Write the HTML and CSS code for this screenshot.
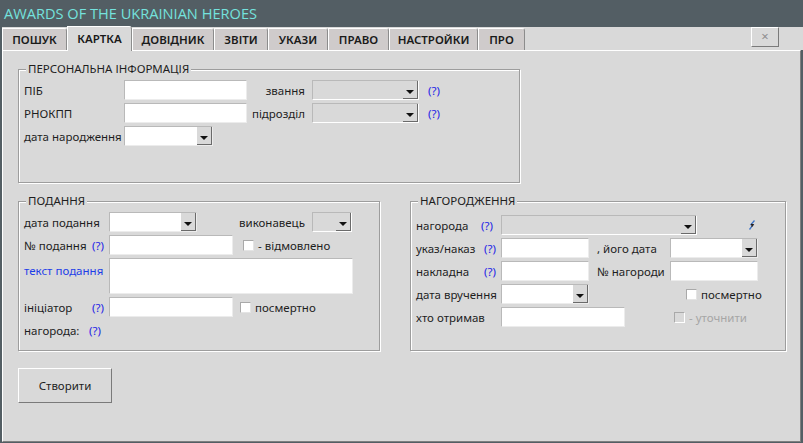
FILE: index.html
```html
<!DOCTYPE html>
<html lang="uk">
<head>
<meta charset="utf-8">
<title>AWARDS OF THE UKRAINIAN HEROES</title>
<link rel="stylesheet" href="styles.css">
</head>
<body>
<div class="title">AWARDS OF THE UKRAINIAN HEROES</div>
<div class="tabs">
  <div class="tab t1">ПОШУК</div>
  <div class="tab t2 active">КАРТКА</div>
  <div class="tab t3">ДОВІДНИК</div>
  <div class="tab t4">ЗВІТИ</div>
  <div class="tab t5">УКАЗИ</div>
  <div class="tab t6">ПРАВО</div>
  <div class="tab t7">НАСТРОЙКИ</div>
  <div class="tab t8">ПРО</div>
  <div class="close">×</div>
</div>
<div class="panel">
  <div class="frame personal">
    <div class="legend">ПЕРСОНАЛЬНА ІНФОРМАЦІЯ</div>
    <div class="row">
      <div class="lbl w100">ПІБ</div>
      <div class="input w123"></div>
      <div class="lbl rlbl">звання</div>
      <div class="combo disabled w106"><div class="field"></div><div class="drop"><i></i></div></div>
      <span class="help hp">(?)</span>
    </div>
    <div class="row">
      <div class="lbl w100">РНОКПП</div>
      <div class="input w123"></div>
      <div class="lbl rlbl">підрозділ</div>
      <div class="combo disabled w106"><div class="field"></div><div class="drop"><i></i></div></div>
      <span class="help hp">(?)</span>
    </div>
    <div class="row">
      <div class="lbl w100">дата народження</div>
      <div class="combo w89"><div class="field"></div><div class="drop"><i></i></div></div>
    </div>
  </div>

  <div class="lower">
    <div class="frame podannya">
      <div class="legend">ПОДАННЯ</div>
      <div class="row">
        <div class="lbl w85">дата подання</div>
        <div class="combo w88"><div class="field"></div><div class="drop"><i></i></div></div>
        <div class="lbl vyk">виконавець</div>
        <div class="combo disabled w40"><div class="field"></div><div class="drop"><i></i></div></div>
      </div>
      <div class="row">
        <div class="lbl w85 split"><span>№ подання</span><span class="help">(?)</span></div>
        <div class="input w124"></div>
        <span class="check ml10"></span><span class="ctext">- відмовлено</span>
      </div>
      <div class="row tall">
        <div class="lbl w85 blue top">текст подання</div>
        <div class="input area"></div>
      </div>
      <div class="row">
        <div class="lbl w85 split"><span>ініціатор</span><span class="help">(?)</span></div>
        <div class="input w124"></div>
        <span class="check ml6"></span><span class="ctext">посмертно</span>
      </div>
      <div class="row">
        <div class="lbl w82 split"><span>нагорода:</span><span class="help">(?)</span></div>
      </div>
    </div>

    <div class="frame nagorod">
      <div class="legend">НАГОРОДЖЕННЯ</div>
      <div class="row">
        <div class="lbl w85 split pr8"><span>нагорода</span><span class="help">(?)</span></div>
        <div class="combo disabled w196"><div class="field"></div><div class="drop"><i></i></div></div>
        <svg class="bolt" width="8" height="10" viewBox="0 0 8 10" aria-hidden="true">
          <path d="M6.5 0.5 L3 4.5 L5 4.8 L1.5 9.5" fill="none" stroke="#3d74c9" stroke-width="1.3" stroke-linejoin="miter"/>
          <path d="M3 4.5 L5 4.8 L3.6 6.6" fill="none" stroke="#2e2218" stroke-width="1.3"/>
        </svg>
      </div>
      <div class="row">
        <div class="lbl w85 split"><span>указ/наказ</span><span class="help">(?)</span></div>
        <div class="input w88"></div>
        <div class="lbl mid">, його дата</div>
        <div class="combo w88"><div class="field"></div><div class="drop"><i></i></div></div>
      </div>
      <div class="row">
        <div class="lbl w85 split"><span>накладна</span><span class="help">(?)</span></div>
        <div class="input w88"></div>
        <div class="lbl mid">№ нагороди</div>
        <div class="input w88"></div>
      </div>
      <div class="row">
        <div class="lbl w85">дата вручення</div>
        <div class="combo w88"><div class="field"></div><div class="drop"><i></i></div></div>
        <span class="check ml97"></span><span class="ctext">посмертно</span>
      </div>
      <div class="row">
        <div class="lbl w85">хто отримав</div>
        <div class="input w124"></div>
        <span class="check dis ml49"></span><span class="ctext grey">- уточнити</span>
      </div>
    </div>
  </div>

  <div class="btn">Створити</div>
</div>
</body>
</html>
```

FILE: styles.css
```css
* { box-sizing: border-box; }

html, body {
  margin: 0;
  padding: 0;
}

body {
  width: 803px;
  height: 443px;
  overflow: hidden;
  background: #535e64;
  font-family: "Noto Sans", "Open Sans", sans-serif;
  font-size: 11.5px;
  color: #1e1e1e;
}

.title {
  height: 27px;
  line-height: 26px;
  padding-left: 4px;
  color: #74e2dd;
  font-family: "Open Sans", sans-serif;
  font-size: 14.6px;
  white-space: nowrap;
}

.tabs {
  display: flex;
  align-items: flex-end;
  height: 23px;
  margin-left: 2px;
  background: #d9d9d9;
}

.tab {
  height: 22px;
  line-height: 21px;
  text-align: center;
  font-weight: 600;
  font-size: 11.5px;
  color: #1a1a1a;
  background: #cfcbcb;
  border-top: 1px solid #fff;
  border-left: 1px solid #fff;
  border-right: 1px solid #8c8c8c;
  border-top-right-radius: 3px;
  white-space: nowrap;
}

.tab.active {
  height: 25px;
  line-height: 23px;
  margin-bottom: -1px;
  background: #d9d9d9;
  position: relative;
  z-index: 1;
}

.t1 { width: 65px; }
.t2 { width: 65px; }
.t3 { width: 82px; }
.t4 { width: 54px; }
.t5 { width: 60px; }
.t6 { width: 61px; }
.t7 { width: 89px; }
.t8 { width: 47px; }

.close {
  align-self: flex-start;
  margin-left: auto;
  margin-right: 24px;
  width: 28px;
  height: 20px;
  line-height: 17px;
  text-align: center;
  color: #8e8e8e;
  font-size: 13px;
  border-top: 1px solid #fff;
  border-left: 1px solid #fff;
  border-right: 1px solid #7a7a7a;
  border-bottom: 1px solid #7a7a7a;
}

.panel {
  margin-left: 2px;
  width: 799px;
  height: 392px;
  background: #d9d9d9;
  border-top: 1px solid #fff;
  border-left: 1px solid #fff;
  border-right: 1px solid #7f7f7f;
  border-bottom: 1px solid #7f7f7f;
  padding-left: 15px;
  padding-top: 18px;
}

.frame {
  position: relative;
  border: 1px solid #9d9d9d;
  box-shadow: inset 1px 1px 0 #fff, 1px 1px 0 #fff;
  padding-left: 5px;
}

.legend {
  position: absolute;
  top: -9px;
  left: 7px;
  padding: 0 2px;
  line-height: 16px;
  background: #d9d9d9;
  white-space: nowrap;
}

.personal {
  width: 502px;
  height: 114px;
  padding-top: 10px;
}

.lower {
  display: flex;
  gap: 30px;
  margin-top: 18px;
}

.podannya {
  width: 362px;
  height: 150px;
  padding-top: 10px;
}

.nagorod {
  width: 376px;
  height: 150px;
  padding-top: 13px;
}

.row {
  display: flex;
  align-items: center;
  height: 20px;
  margin-bottom: 3px;
  white-space: nowrap;
}

.row.tall {
  height: 36px;
  align-items: flex-start;
}

.lbl { flex: none; }
.w100 { width: 100px; }
.w85 { width: 85px; }
.w82 { width: 82px; }
.split { display: flex; justify-content: space-between; padding-right: 5px; }
.pr8 { padding-right: 8px; }
.top { padding-top: 5px; }
.blue { color: #1d3ee8; }
.rlbl { width: 65px; text-align: right; padding-right: 7px; }
.vyk { width: 115px; padding-left: 42px; }
.mid { width: 81px; padding-left: 8px; }

.help { color: #2424e6; }
.hp { margin-left: 9px; }

.input, .combo {
  flex: none;
  height: 20px;
  background: #fff;
  border-top: 1px solid #b9b9b9;
  border-left: 1px solid #b9b9b9;
  border-right: 1px solid #ececec;
  border-bottom: 1px solid #ececec;
}

.w123 { width: 123px; }
.w124 { width: 124px; }
.w106 { width: 107px; }
.w89 { width: 89px; }
.w88 { width: 88px; }
.w40 { width: 40px; }
.w196 { width: 196px; }
.area { width: 244px; height: 36px; }

.combo {
  display: flex;
}

.combo .field { flex: 1; }

.combo.disabled {
  background: #d9d9d9;
  border-right-color: #fff;
  border-bottom-color: #fff;
}

.drop {
  flex: none;
  width: 15px;
  background: #d9d9d9;
  border-right: 1px solid #6a6a6a;
  border-bottom: 1px solid #6a6a6a;
  display: flex;
  justify-content: center;
  align-items: flex-end;
  padding-bottom: 4px;
}

.drop i {
  display: block;
  width: 0;
  height: 0;
  border-left: 4px solid transparent;
  border-right: 4px solid transparent;
  border-top: 4px solid #111;
}

.check {
  flex: none;
  display: inline-block;
  width: 11px;
  height: 11px;
  background: #fff;
  border-top: 1px solid #a9a9a9;
  border-left: 1px solid #a9a9a9;
  border-right: 1px solid #e4e4e4;
  border-bottom: 1px solid #e4e4e4;
}

.check.dis {
  background: #d9d9d9;
  border-right-color: #fff;
  border-bottom-color: #fff;
}

.ctext { margin-left: 4px; }
.grey { color: #a6a6a6; }

.ml10 { margin-left: 10px; }
.ml6 { margin-left: 7px; }
.ml97 { margin-left: 97px; }
.ml49 { margin-left: 49px; }

.bolt {
  flex: none;
  margin-left: 51px;
}

.btn {
  width: 94px;
  height: 35px;
  margin-top: 17px;
  line-height: 33px;
  text-align: center;
  border-top: 1px solid #fff;
  border-left: 1px solid #fff;
  border-right: 1px solid #7a7a7a;
  border-bottom: 1px solid #7a7a7a;
}
```
